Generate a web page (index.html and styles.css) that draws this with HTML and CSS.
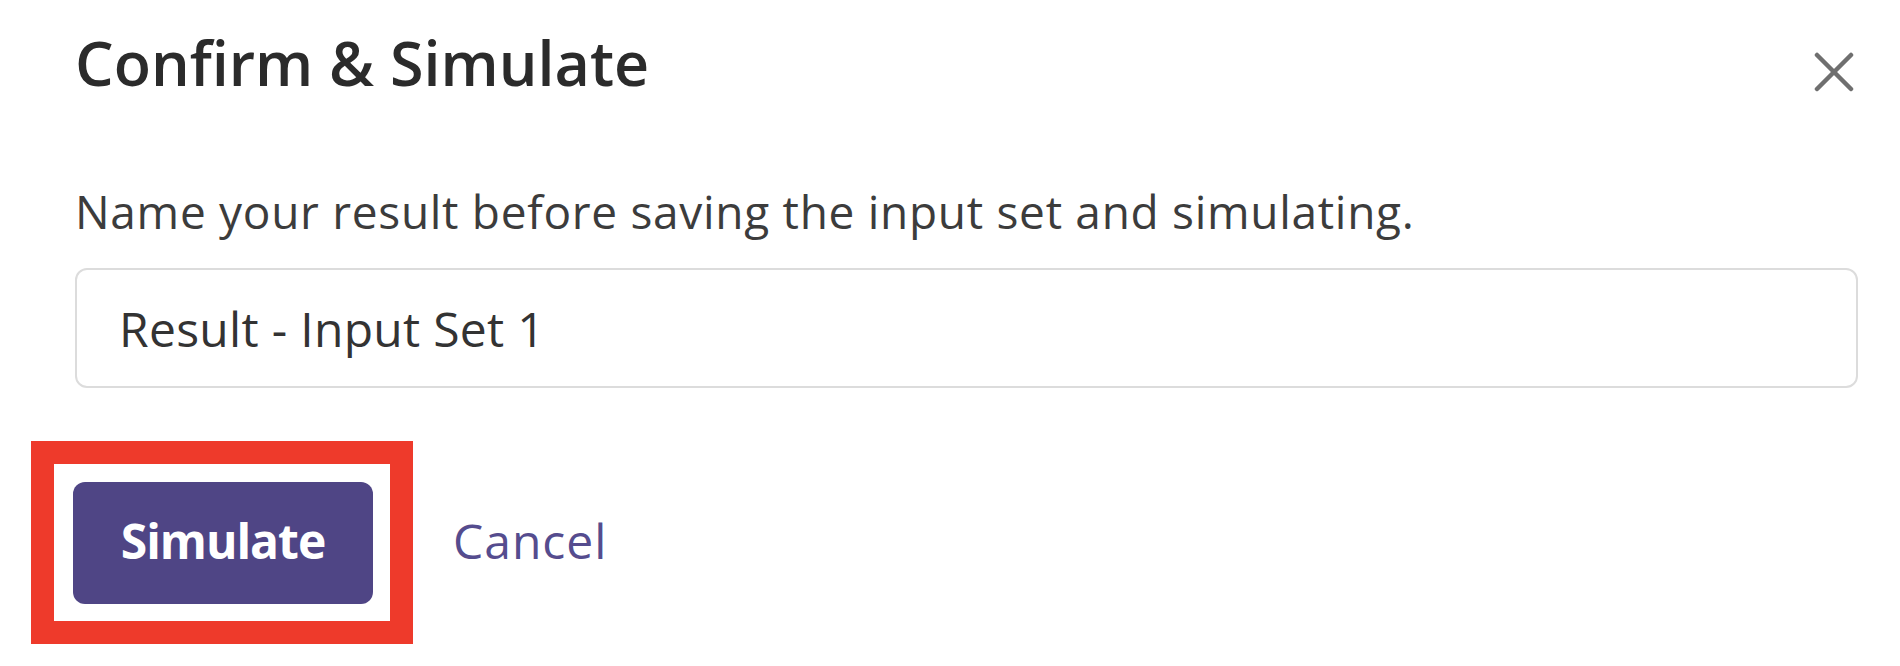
FILE: index.html
```html
<!DOCTYPE html>
<html lang="en">
<head>
    <meta charset="UTF-8">
    <meta name="viewport" content="width=device-width, initial-scale=1.0">
    <title>Confirm &amp; Simulate</title>
    <link rel="stylesheet" href="styles.css">
</head>
<body>
    <div class="dialog">
        <header class="dialog-header">
            <h2>Confirm &amp; Simulate</h2>
            <button class="close" type="button" aria-label="Close">
                <svg width="40" height="40" viewBox="0 0 40 40">
                    <line x1="3" y1="3" x2="37" y2="37" />
                    <line x1="37" y1="3" x2="3" y2="37" />
                </svg>
            </button>
        </header>
        <p class="dialog-text">Name your result before saving the input set and simulating.</p>
        <input class="name-input" type="text" value="Result - Input Set 1">
        <div class="actions">
            <span class="highlight">
                <button class="btn-primary" type="button">Simulate</button>
            </span>
            <button class="btn-link" type="button">Cancel</button>
        </div>
    </div>
</body>
</html>
```

FILE: styles.css
```css
body {
    font-family: 'Open Sans', 'Noto Sans', sans-serif;
    background-color: #ffffff;
    color: #333333;
    margin: 0;
    padding: 0;
}
.dialog {
    padding: 25px 42px 62px 75px;
}
.dialog-header {
    display: flex;
    justify-content: space-between;
    align-items: flex-start;
}
.dialog-header h2 {
    margin: 0;
    font-size: 61px;
    line-height: 76px;
    font-weight: 600;
    color: #2b2b2b;
}
.close {
    width: 40px;
    height: 40px;
    margin: 27px 4px 0 0;
    padding: 0;
    border: 0;
    background: none;
    cursor: pointer;
}
.close svg {
    display: block;
}
.close line {
    stroke: #6f6f6f;
    stroke-width: 4.5;
    stroke-linecap: round;
}
.dialog-text {
    margin: 85px 0 0 0;
    font-size: 46px;
    line-height: 50px;
    letter-spacing: 0.7px;
    color: #3c3c3c;
}
.name-input {
    display: block;
    box-sizing: border-box;
    width: 100%;
    height: 120px;
    margin-top: 32px;
    padding: 0 42px;
    border: 2px solid #dcdcdc;
    border-radius: 12px;
    font-family: inherit;
    font-size: 48px;
    letter-spacing: 0.3px;
    color: #333333;
    outline: none;
}
.actions {
    display: flex;
    align-items: center;
    gap: 80px;
    margin-top: 94px;
}
.highlight {
    position: relative;
    display: block;
    margin-left: -2px;
}
.highlight::after {
    content: "";
    position: absolute;
    top: -41px;
    right: -40px;
    bottom: -40px;
    left: -42px;
    border: 23px solid #ee3a2b;
    pointer-events: none;
}
.btn-primary {
    display: block;
    width: 300px;
    height: 122px;
    padding: 0 0 6px 0;
    border: 0;
    border-radius: 12px;
    background-color: #4f4585;
    color: #ffffff;
    font-family: inherit;
    font-size: 48px;
    font-weight: 700;
    letter-spacing: -1px;
    cursor: pointer;
}
.btn-link {
    padding: 0 0 6px 0;
    border: 0;
    background: none;
    color: #554c8e;
    font-family: inherit;
    font-size: 48px;
    letter-spacing: 1px;
    cursor: pointer;
}
```
